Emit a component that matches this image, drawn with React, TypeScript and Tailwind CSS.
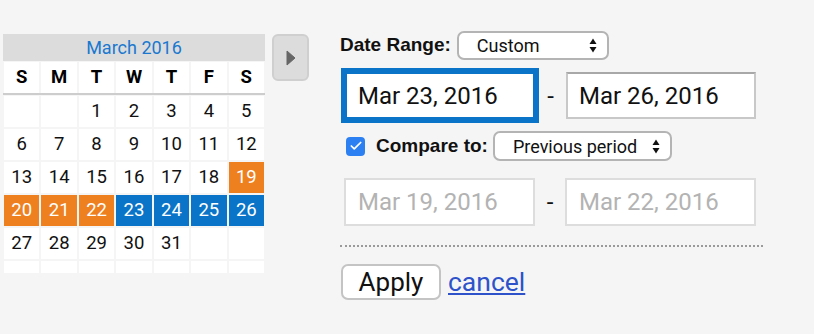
import { Check } from 'lucide-react';

type Day = { n?: number; kind?: 'compare' | 'range' };

const weeks: Day[][] = [
    [{}, {}, { n: 1 }, { n: 2 }, { n: 3 }, { n: 4 }, { n: 5 }],
    [{ n: 6 }, { n: 7 }, { n: 8 }, { n: 9 }, { n: 10 }, { n: 11 }, { n: 12 }],
    [{ n: 13 }, { n: 14 }, { n: 15 }, { n: 16 }, { n: 17 }, { n: 18 }, { n: 19, kind: 'compare' }],
    [
        { n: 20, kind: 'compare' },
        { n: 21, kind: 'compare' },
        { n: 22, kind: 'compare' },
        { n: 23, kind: 'range' },
        { n: 24, kind: 'range' },
        { n: 25, kind: 'range' },
        { n: 26, kind: 'range' },
    ],
    [{ n: 27 }, { n: 28 }, { n: 29 }, { n: 30 }, { n: 31 }, {}, {}],
    [{}, {}, {}, {}, {}, {}, {}],
];

const weekdays = ['S', 'M', 'T', 'W', 'T', 'F', 'S'];

const SelectArrows = () => (
    <svg width="8" height="15" viewBox="0 0 8 15" className="shrink-0">
        <path d="M4 0.5 L7.5 6 L0.5 6 Z" fill="#111" />
        <path d="M4 14.5 L7.5 9 L0.5 9 Z" fill="#111" />
    </svg>
);

function Select({ label, width }: { label: string; width: string }) {
    return (
        <div
            className={`${width} h-full flex items-center justify-between pl-[18px] pr-[10px] bg-white border-2 border-[#b4b4b4] rounded-[7px] text-[18px] text-[#111]`}
        >
            <span>{label}</span>
            <SelectArrows />
        </div>
    );
}

function Calendar() {
    return (
        <div className="w-[262px] h-[239px] overflow-hidden flex flex-col">
            <div className="h-[31px] bg-[#dcdcdc] flex items-center justify-center text-[18px] text-[#1a78cf]">
                March 2016
            </div>
            <div className="mt-[1px] px-[1px] grid grid-cols-7 gap-x-[2px] border-b-2 border-[#cdcdcd]">
                {weekdays.map((d, i) => (
                    <div
                        key={i}
                        className="h-[31px] bg-white flex items-center justify-center font-bold text-[18.5px] text-black"
                    >
                        {d}
                    </div>
                ))}
            </div>
            <div className="mt-[1px] px-[1px] grid grid-cols-7 gap-x-[2px] gap-y-[2px]">
                {weeks.flat().map((d, i) => (
                    <div
                        key={i}
                        className={`h-[31px] flex items-center justify-center text-[18.5px] ${
                            d.kind === 'compare'
                                ? 'bg-[#ee801f] text-white'
                                : d.kind === 'range'
                                  ? 'bg-[#0a74c8] text-white'
                                  : 'bg-white text-[#111]'
                        }`}
                    >
                        {d.n}
                    </div>
                ))}
            </div>
        </div>
    );
}

export default function App() {
    return (
        <div className="w-[814px] h-[334px] bg-[#f5f5f5] flex items-start pt-[31px] pl-[3px] font-['Roboto',sans-serif] overflow-hidden">
            <div className="mt-[3px] flex items-start">
                <Calendar />
                <div className="ml-[7px] w-[37px] h-[47px] bg-[#dcdcdc] border-2 border-[#cfcfcf] rounded-[6px] flex items-center justify-center">
                    <svg width="10" height="16" viewBox="0 0 10 16">
                        <path d="M1 1 L9 8 L1 15 Z" fill="#666" stroke="#666" strokeWidth="1" strokeLinejoin="round" />
                    </svg>
                </div>
            </div>

            <div className="ml-[31px] w-[424px] flex flex-col">
                <div className="h-[29px] flex items-center">
                    <span className="font-bold text-[19px] text-[#111] font-['Liberation_Sans',sans-serif]">
                        Date Range:
                    </span>
                    <div className="ml-[6px] h-[29px]">
                        <Select label="Custom" width="w-[152px]" />
                    </div>
                </div>

                <div className="mt-[12px] pl-[5px] flex items-center">
                    <div className="w-[190px] h-[47px] bg-white border-2 border-[#0a74c8] ring-4 ring-[#0a74c8] flex items-center pl-[11px] text-[24px] text-[#111]">
                        Mar 23, 2016
                    </div>
                    <div className="w-[31px] text-center text-[24px] text-[#111]">-</div>
                    <div className="w-[190px] h-[47px] bg-white border-2 border-[#c8c8c8] border-t-[#a8a8a8] flex items-center pl-[11px] text-[24px] text-[#111]">
                        Mar 26, 2016
                    </div>
                </div>

                <div className="mt-[12px] h-[30px] flex items-center">
                    <div className="ml-[6px] w-[19px] h-[19px] rounded-[4px] bg-[#2d80f2] flex items-center justify-center">
                        <Check size={14} strokeWidth={3} color="white" />
                    </div>
                    <span className="ml-[11px] font-bold text-[19px] text-[#111] font-['Liberation_Sans',sans-serif]">
                        Compare to:
                    </span>
                    <div className="ml-[5px] h-[30px]">
                        <Select label="Previous period" width="w-[179px]" />
                    </div>
                </div>

                <div className="mt-[17px] pl-[4px] flex items-center">
                    <div className="w-[191px] h-[48px] bg-white border-2 border-[#dddddd] flex items-center pl-[12px] text-[24px] text-[#b3b3b3]">
                        Mar 19, 2016
                    </div>
                    <div className="w-[30px] text-center text-[24px] text-[#111]">-</div>
                    <div className="w-[191px] h-[48px] bg-white border-2 border-[#dddddd] flex items-center pl-[12px] text-[24px] text-[#b3b3b3]">
                        Mar 22, 2016
                    </div>
                </div>

                <div className="mt-[19px] w-[423px] border-t-2 border-dotted border-[#9a9a9a]" />

                <div className="mt-[17px] flex items-center">
                    <button className="ml-[1px] w-[100px] h-[36px] bg-white border-2 border-[#c4c4c4] rounded-[7px] flex items-center justify-center text-[26px] text-[#111] leading-none">
                        Apply
                    </button>
                    <a href="#" className="ml-[7px] text-[26.5px] text-[#2d52c9] underline leading-none">
                        cancel
                    </a>
                </div>
            </div>
        </div>
    );
}
